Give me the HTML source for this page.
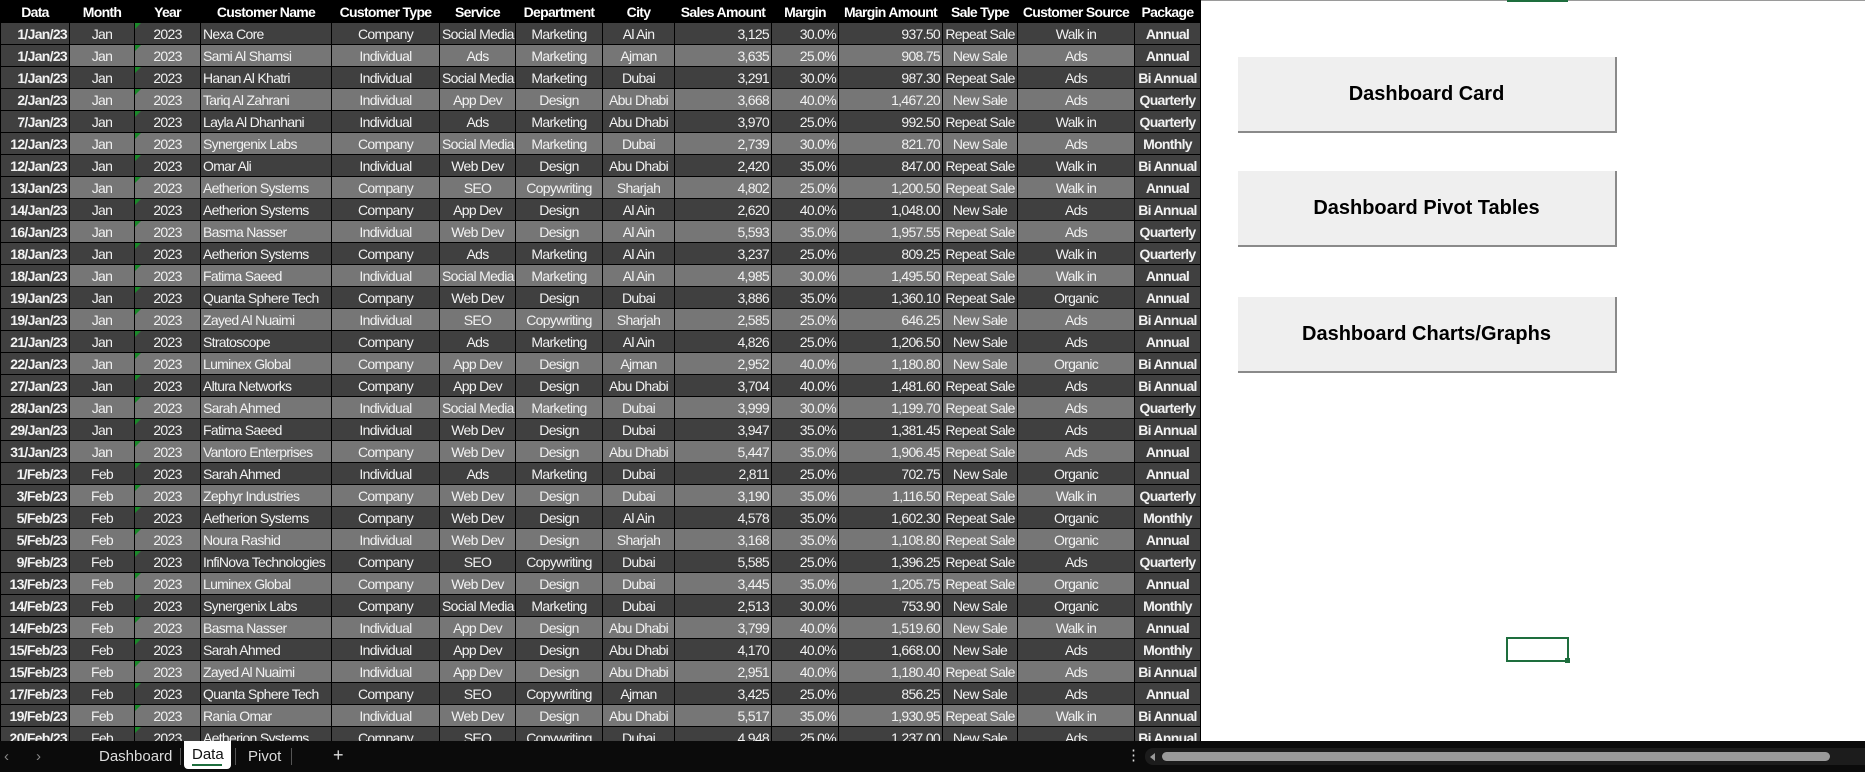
<!DOCTYPE html>
<html><head><meta charset="utf-8"><style>
*{margin:0;padding:0;box-sizing:border-box}
body{width:1865px;height:772px;overflow:hidden;background:#fff;position:relative;font-family:"Liberation Sans Narrow","Liberation Sans",sans-serif}
table{position:absolute;left:0;top:0;width:1200px;border-collapse:collapse;table-layout:fixed;font-size:14px;letter-spacing:-0.7px;color:#f2f2f2}
td,th{border:1px solid #000;white-space:nowrap;overflow:hidden;height:22px;padding:0 2px;text-align:center;background:#404040;font-weight:normal;line-height:20px}
th{background:#000;color:#fff;font-weight:bold;height:22px}
tr.l td{background:#767676}
tr td:first-child,tr.l td:first-child{background:#404040;font-weight:bold;text-align:right}
tr td:last-child,tr.l td:last-child{background:#404040;font-weight:bold}
td:nth-child(4){text-align:left}
td:nth-child(9),td:nth-child(10),td:nth-child(11){text-align:right}
td:nth-child(3){position:relative}
td:nth-child(3)::before{content:"";position:absolute;left:0;top:0;border-top:6px solid #1a8a2a;border-right:6px solid transparent}
.btn{position:absolute;left:1238px;width:379px;height:76px;background:#efefef;border-right:2px solid #8a8a8a;border-bottom:2px solid #8a8a8a;font-family:"Liberation Sans",sans-serif;font-weight:bold;font-size:20px;color:#000;display:flex;align-items:center;justify-content:center}
.bar{position:absolute;left:0;top:741px;width:1865px;height:31px;background:#0b0b0b;font-family:"Liberation Sans",sans-serif;color:#ddd;font-size:15px}
.bar span{position:absolute;top:7px}
</style></head><body>
<div style="position:absolute;left:1200px;top:0;width:665px;height:1px;background:#9a9a9a"></div>
<div style="position:absolute;left:1507px;top:0;width:61px;height:2px;background:#1e6e3e"></div>
<table>
<colgroup><col style="width:69px"><col style="width:65px"><col style="width:66px"><col style="width:131px"><col style="width:108px"><col style="width:76px"><col style="width:87px"><col style="width:72px"><col style="width:97px"><col style="width:67px"><col style="width:104px"><col style="width:75px"><col style="width:117px"><col style="width:66px"></colgroup>
<tr><th>Data</th><th>Month</th><th>Year</th><th>Customer Name</th><th>Customer Type</th><th>Service</th><th>Department</th><th>City</th><th>Sales Amount</th><th>Margin</th><th>Margin Amount</th><th>Sale Type</th><th>Customer Source</th><th>Package</th></tr>
<tr><td>1/Jan/23</td><td>Jan</td><td>2023</td><td>Nexa Core</td><td>Company</td><td>Social Media</td><td>Marketing</td><td>Al Ain</td><td>3,125</td><td>30.0%</td><td>937.50</td><td>Repeat Sale</td><td>Walk in</td><td>Annual</td></tr>
<tr class="l"><td>1/Jan/23</td><td>Jan</td><td>2023</td><td>Sami Al Shamsi</td><td>Individual</td><td>Ads</td><td>Marketing</td><td>Ajman</td><td>3,635</td><td>25.0%</td><td>908.75</td><td>New Sale</td><td>Ads</td><td>Annual</td></tr>
<tr><td>1/Jan/23</td><td>Jan</td><td>2023</td><td>Hanan Al Khatri</td><td>Individual</td><td>Social Media</td><td>Marketing</td><td>Dubai</td><td>3,291</td><td>30.0%</td><td>987.30</td><td>Repeat Sale</td><td>Ads</td><td>Bi Annual</td></tr>
<tr class="l"><td>2/Jan/23</td><td>Jan</td><td>2023</td><td>Tariq Al Zahrani</td><td>Individual</td><td>App Dev</td><td>Design</td><td>Abu Dhabi</td><td>3,668</td><td>40.0%</td><td>1,467.20</td><td>New Sale</td><td>Ads</td><td>Quarterly</td></tr>
<tr><td>7/Jan/23</td><td>Jan</td><td>2023</td><td>Layla Al Dhanhani</td><td>Individual</td><td>Ads</td><td>Marketing</td><td>Abu Dhabi</td><td>3,970</td><td>25.0%</td><td>992.50</td><td>Repeat Sale</td><td>Walk in</td><td>Quarterly</td></tr>
<tr class="l"><td>12/Jan/23</td><td>Jan</td><td>2023</td><td>Synergenix Labs</td><td>Company</td><td>Social Media</td><td>Marketing</td><td>Dubai</td><td>2,739</td><td>30.0%</td><td>821.70</td><td>New Sale</td><td>Ads</td><td>Monthly</td></tr>
<tr><td>12/Jan/23</td><td>Jan</td><td>2023</td><td>Omar Ali</td><td>Individual</td><td>Web Dev</td><td>Design</td><td>Abu Dhabi</td><td>2,420</td><td>35.0%</td><td>847.00</td><td>Repeat Sale</td><td>Walk in</td><td>Bi Annual</td></tr>
<tr class="l"><td>13/Jan/23</td><td>Jan</td><td>2023</td><td>Aetherion Systems</td><td>Company</td><td>SEO</td><td>Copywriting</td><td>Sharjah</td><td>4,802</td><td>25.0%</td><td>1,200.50</td><td>Repeat Sale</td><td>Walk in</td><td>Annual</td></tr>
<tr><td>14/Jan/23</td><td>Jan</td><td>2023</td><td>Aetherion Systems</td><td>Company</td><td>App Dev</td><td>Design</td><td>Al Ain</td><td>2,620</td><td>40.0%</td><td>1,048.00</td><td>New Sale</td><td>Ads</td><td>Bi Annual</td></tr>
<tr class="l"><td>16/Jan/23</td><td>Jan</td><td>2023</td><td>Basma Nasser</td><td>Individual</td><td>Web Dev</td><td>Design</td><td>Al Ain</td><td>5,593</td><td>35.0%</td><td>1,957.55</td><td>Repeat Sale</td><td>Ads</td><td>Quarterly</td></tr>
<tr><td>18/Jan/23</td><td>Jan</td><td>2023</td><td>Aetherion Systems</td><td>Company</td><td>Ads</td><td>Marketing</td><td>Al Ain</td><td>3,237</td><td>25.0%</td><td>809.25</td><td>Repeat Sale</td><td>Walk in</td><td>Quarterly</td></tr>
<tr class="l"><td>18/Jan/23</td><td>Jan</td><td>2023</td><td>Fatima Saeed</td><td>Individual</td><td>Social Media</td><td>Marketing</td><td>Al Ain</td><td>4,985</td><td>30.0%</td><td>1,495.50</td><td>Repeat Sale</td><td>Walk in</td><td>Annual</td></tr>
<tr><td>19/Jan/23</td><td>Jan</td><td>2023</td><td>Quanta Sphere Tech</td><td>Company</td><td>Web Dev</td><td>Design</td><td>Dubai</td><td>3,886</td><td>35.0%</td><td>1,360.10</td><td>Repeat Sale</td><td>Organic</td><td>Annual</td></tr>
<tr class="l"><td>19/Jan/23</td><td>Jan</td><td>2023</td><td>Zayed Al Nuaimi</td><td>Individual</td><td>SEO</td><td>Copywriting</td><td>Sharjah</td><td>2,585</td><td>25.0%</td><td>646.25</td><td>New Sale</td><td>Ads</td><td>Bi Annual</td></tr>
<tr><td>21/Jan/23</td><td>Jan</td><td>2023</td><td>Stratoscope</td><td>Company</td><td>Ads</td><td>Marketing</td><td>Al Ain</td><td>4,826</td><td>25.0%</td><td>1,206.50</td><td>New Sale</td><td>Ads</td><td>Annual</td></tr>
<tr class="l"><td>22/Jan/23</td><td>Jan</td><td>2023</td><td>Luminex Global</td><td>Company</td><td>App Dev</td><td>Design</td><td>Ajman</td><td>2,952</td><td>40.0%</td><td>1,180.80</td><td>New Sale</td><td>Organic</td><td>Bi Annual</td></tr>
<tr><td>27/Jan/23</td><td>Jan</td><td>2023</td><td>Altura Networks</td><td>Company</td><td>App Dev</td><td>Design</td><td>Abu Dhabi</td><td>3,704</td><td>40.0%</td><td>1,481.60</td><td>Repeat Sale</td><td>Ads</td><td>Bi Annual</td></tr>
<tr class="l"><td>28/Jan/23</td><td>Jan</td><td>2023</td><td>Sarah Ahmed</td><td>Individual</td><td>Social Media</td><td>Marketing</td><td>Dubai</td><td>3,999</td><td>30.0%</td><td>1,199.70</td><td>Repeat Sale</td><td>Ads</td><td>Quarterly</td></tr>
<tr><td>29/Jan/23</td><td>Jan</td><td>2023</td><td>Fatima Saeed</td><td>Individual</td><td>Web Dev</td><td>Design</td><td>Dubai</td><td>3,947</td><td>35.0%</td><td>1,381.45</td><td>Repeat Sale</td><td>Ads</td><td>Bi Annual</td></tr>
<tr class="l"><td>31/Jan/23</td><td>Jan</td><td>2023</td><td>Vantoro Enterprises</td><td>Company</td><td>Web Dev</td><td>Design</td><td>Abu Dhabi</td><td>5,447</td><td>35.0%</td><td>1,906.45</td><td>Repeat Sale</td><td>Ads</td><td>Annual</td></tr>
<tr><td>1/Feb/23</td><td>Feb</td><td>2023</td><td>Sarah Ahmed</td><td>Individual</td><td>Ads</td><td>Marketing</td><td>Dubai</td><td>2,811</td><td>25.0%</td><td>702.75</td><td>New Sale</td><td>Organic</td><td>Annual</td></tr>
<tr class="l"><td>3/Feb/23</td><td>Feb</td><td>2023</td><td>Zephyr Industries</td><td>Company</td><td>Web Dev</td><td>Design</td><td>Dubai</td><td>3,190</td><td>35.0%</td><td>1,116.50</td><td>Repeat Sale</td><td>Walk in</td><td>Quarterly</td></tr>
<tr><td>5/Feb/23</td><td>Feb</td><td>2023</td><td>Aetherion Systems</td><td>Company</td><td>Web Dev</td><td>Design</td><td>Al Ain</td><td>4,578</td><td>35.0%</td><td>1,602.30</td><td>Repeat Sale</td><td>Organic</td><td>Monthly</td></tr>
<tr class="l"><td>5/Feb/23</td><td>Feb</td><td>2023</td><td>Noura Rashid</td><td>Individual</td><td>Web Dev</td><td>Design</td><td>Sharjah</td><td>3,168</td><td>35.0%</td><td>1,108.80</td><td>Repeat Sale</td><td>Organic</td><td>Annual</td></tr>
<tr><td>9/Feb/23</td><td>Feb</td><td>2023</td><td>InfiNova Technologies</td><td>Company</td><td>SEO</td><td>Copywriting</td><td>Dubai</td><td>5,585</td><td>25.0%</td><td>1,396.25</td><td>Repeat Sale</td><td>Ads</td><td>Quarterly</td></tr>
<tr class="l"><td>13/Feb/23</td><td>Feb</td><td>2023</td><td>Luminex Global</td><td>Company</td><td>Web Dev</td><td>Design</td><td>Dubai</td><td>3,445</td><td>35.0%</td><td>1,205.75</td><td>Repeat Sale</td><td>Organic</td><td>Annual</td></tr>
<tr><td>14/Feb/23</td><td>Feb</td><td>2023</td><td>Synergenix Labs</td><td>Company</td><td>Social Media</td><td>Marketing</td><td>Dubai</td><td>2,513</td><td>30.0%</td><td>753.90</td><td>New Sale</td><td>Organic</td><td>Monthly</td></tr>
<tr class="l"><td>14/Feb/23</td><td>Feb</td><td>2023</td><td>Basma Nasser</td><td>Individual</td><td>App Dev</td><td>Design</td><td>Abu Dhabi</td><td>3,799</td><td>40.0%</td><td>1,519.60</td><td>New Sale</td><td>Walk in</td><td>Annual</td></tr>
<tr><td>15/Feb/23</td><td>Feb</td><td>2023</td><td>Sarah Ahmed</td><td>Individual</td><td>App Dev</td><td>Design</td><td>Abu Dhabi</td><td>4,170</td><td>40.0%</td><td>1,668.00</td><td>New Sale</td><td>Ads</td><td>Monthly</td></tr>
<tr class="l"><td>15/Feb/23</td><td>Feb</td><td>2023</td><td>Zayed Al Nuaimi</td><td>Individual</td><td>App Dev</td><td>Design</td><td>Abu Dhabi</td><td>2,951</td><td>40.0%</td><td>1,180.40</td><td>Repeat Sale</td><td>Ads</td><td>Bi Annual</td></tr>
<tr><td>17/Feb/23</td><td>Feb</td><td>2023</td><td>Quanta Sphere Tech</td><td>Company</td><td>SEO</td><td>Copywriting</td><td>Ajman</td><td>3,425</td><td>25.0%</td><td>856.25</td><td>New Sale</td><td>Ads</td><td>Annual</td></tr>
<tr class="l"><td>19/Feb/23</td><td>Feb</td><td>2023</td><td>Rania Omar</td><td>Individual</td><td>Web Dev</td><td>Design</td><td>Abu Dhabi</td><td>5,517</td><td>35.0%</td><td>1,930.95</td><td>Repeat Sale</td><td>Walk in</td><td>Bi Annual</td></tr>
<tr><td>20/Feb/23</td><td>Feb</td><td>2023</td><td>Aetherion Systems</td><td>Company</td><td>SEO</td><td>Copywriting</td><td>Dubai</td><td>4,948</td><td>25.0%</td><td>1,237.00</td><td>New Sale</td><td>Ads</td><td>Bi Annual</td></tr>
</table>
<div class="btn" style="top:57px">Dashboard Card</div>
<div class="btn" style="top:171px">Dashboard Pivot Tables</div>
<div class="btn" style="top:297px">Dashboard Charts/Graphs</div>
<div style="position:absolute;left:1506px;top:637px;width:63px;height:25px;border:2px solid #1e6e3e"></div>
<div style="position:absolute;left:1565px;top:658px;width:5px;height:5px;background:#1e6e3e"></div>
<div class="bar">
<span style="left:4px;color:#888">&#8249;</span><span style="left:36px;color:#888">&#8250;</span>
<span style="left:99px">Dashboard</span>
<div style="position:absolute;left:180px;top:7px;width:1px;height:17px;background:#555"></div>
<div style="position:absolute;left:184px;top:0;width:47px;height:28px;background:#fff;border-radius:0 0 4px 4px"></div>
<span style="left:192px;top:5px;color:#111;font-weight:normal">Data</span>
<div style="position:absolute;left:192px;top:23px;width:30px;height:2px;background:#1e6e3e"></div>
<div style="position:absolute;left:235px;top:7px;width:1px;height:17px;background:#555"></div>
<span style="left:248px">Pivot</span>
<div style="position:absolute;left:291px;top:7px;width:1px;height:17px;background:#555"></div>
<span style="left:333px;font-size:18px;top:4px">+</span>
<span style="left:1126px;top:5px">&#8942;</span>
<div style="position:absolute;left:1145px;top:7px;width:720px;height:17px;background:#1c1c1c;border-radius:8px 0 0 8px"></div>
<div style="position:absolute;left:1150px;top:12px;border-right:5px solid #999;border-top:4px solid transparent;border-bottom:4px solid transparent"></div>
<div style="position:absolute;left:1162px;top:11px;width:668px;height:9px;background:#9a9a9a;border-radius:5px"></div>
</div>
</body></html>
